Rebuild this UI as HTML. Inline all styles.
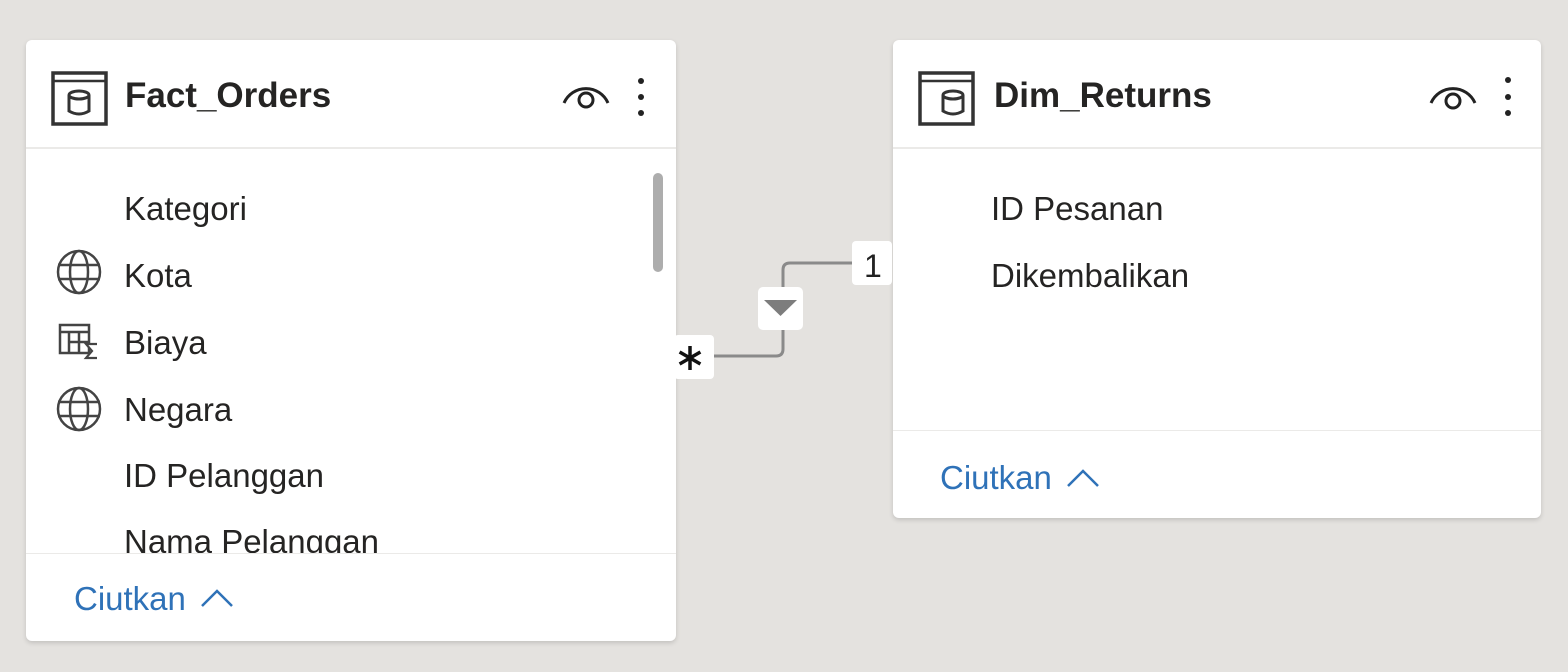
<!DOCTYPE html>
<html><head><meta charset="utf-8"><style>
*{margin:0;padding:0;box-sizing:border-box}
body{width:1568px;height:672px;background:#e4e2df;position:relative;overflow:hidden;font-family:"Liberation Sans",sans-serif;}
.card{position:absolute;background:#fff;border-radius:6px;box-shadow:0 2px 5px rgba(0,0,0,.15);overflow:hidden}
.t{position:absolute;font-size:33px;color:#252423;white-space:nowrap;line-height:1}
.title{position:absolute;font-size:35px;font-weight:bold;color:#252423;line-height:1}
.hr{position:absolute;left:0;right:0;height:2px;background:#ebeae8}
.link{position:absolute;font-size:33px;color:#2f72b8;line-height:1}
svg{position:absolute;overflow:visible}
</style></head><body>

<div class="card" style="left:26px;top:40px;width:650px;height:601px">
  <svg style="left:0;top:0" width="650" height="601">
    <rect x="27" y="33" width="53" height="51" fill="none" stroke="#333" stroke-width="3.5"/>
    <line x1="27" y1="41" x2="80" y2="41" stroke="#333" stroke-width="2.5"/>
    <ellipse cx="53" cy="55" rx="10" ry="4" fill="none" stroke="#333" stroke-width="3"/>
    <path d="M43 55 V71 Q53 77 63 71 V55" fill="none" stroke="#333" stroke-width="3"/>
    <path d="M538 63 A24 24 0 0 1 582 63" fill="none" stroke="#222" stroke-width="3"/>
    <circle cx="560" cy="60" r="7" fill="none" stroke="#222" stroke-width="3"/>
    <circle cx="615" cy="41" r="3" fill="#222"/><circle cx="615" cy="57" r="3" fill="#222"/><circle cx="615" cy="73" r="3" fill="#222"/>
    <rect x="627" y="133" width="10" height="99" rx="5" fill="#adadad"/>
    <g fill="none" stroke="#444" stroke-width="2.5">
      <circle cx="53" cy="232" r="21"/><ellipse cx="53" cy="232" rx="9" ry="21"/>
      <line x1="32" y1="225" x2="74" y2="225"/><line x1="32" y1="239" x2="74" y2="239"/>
      <circle cx="53" cy="369" r="21"/><ellipse cx="53" cy="369" rx="9" ry="21"/>
      <line x1="32" y1="362" x2="74" y2="362"/><line x1="32" y1="376" x2="74" y2="376"/>
      <rect x="34" y="285" width="29" height="28"/>
      <line x1="34" y1="292" x2="63" y2="292"/><line x1="43" y1="292" x2="43" y2="313"/><line x1="53" y1="292" x2="53" y2="313"/><line x1="43" y1="302" x2="63" y2="302"/>
      <path d="M71 304 H60 L66 311 L60 318 H71" stroke-width="2.2" fill="#fff"/>
    </g>
  </svg>
  <div class="title" style="left:99px;top:38px">Fact_Orders</div>
  <div class="hr" style="top:107px"></div>
  <div class="t" style="left:98px;top:152px">Kategori</div>
  <div class="t" style="left:98px;top:219px">Kota</div>
  <div class="t" style="left:98px;top:286px">Biaya</div>
  <div class="t" style="left:98px;top:353px">Negara</div>
  <div class="t" style="left:98px;top:419px">ID Pelanggan</div>
  <div style="position:absolute;left:0;top:485px;width:650px;height:28px;overflow:hidden"><div class="t" style="left:98px;top:0">Nama Pelanggan</div></div>
  <div class="hr" style="top:513px;height:1px"></div>
  <div class="link" style="left:48px;top:542px">Ciutkan</div>
  <svg style="left:0;top:0" width="650" height="601"><path d="M176 566 L191 551 L206 566" fill="none" stroke="#2f72b8" stroke-width="2.5"/></svg>
</div>

<div class="card" style="left:893px;top:40px;width:648px;height:478px">
  <svg style="left:0;top:0" width="648" height="478">
    <rect x="27" y="33" width="53" height="51" fill="none" stroke="#333" stroke-width="3.5"/>
    <line x1="27" y1="41" x2="80" y2="41" stroke="#333" stroke-width="2.5"/>
    <ellipse cx="60" cy="55" rx="10" ry="4" fill="none" stroke="#333" stroke-width="3"/>
    <path d="M50 55 V71 Q60 77 70 71 V55" fill="none" stroke="#333" stroke-width="3"/>
    <path d="M538 63 A24 24 0 0 1 582 63" fill="none" stroke="#222" stroke-width="3"/>
    <circle cx="560" cy="61" r="7" fill="none" stroke="#222" stroke-width="3"/>
    <circle cx="615" cy="40" r="3" fill="#222"/><circle cx="615" cy="57" r="3" fill="#222"/><circle cx="615" cy="73" r="3" fill="#222"/>
    <path d="M175 446 L190 431 L205 446" fill="none" stroke="#2f72b8" stroke-width="2.5"/>
  </svg>
  <div class="title" style="left:101px;top:38px">Dim_Returns</div>
  <div class="hr" style="top:107px"></div>
  <div class="t" style="left:98px;top:152px">ID Pesanan</div>
  <div class="t" style="left:98px;top:219px">Dikembalikan</div>
  <div class="hr" style="top:390px;height:1px"></div>
  <div class="link" style="left:47px;top:421px">Ciutkan</div>
</div>

<svg style="left:0;top:0" width="1568" height="672">
  <path d="M712 356 H776 Q783 356 783 349 V270 Q783 263 790 263 H855" fill="none" stroke="#8a8a8a" stroke-width="3"/>
  <rect x="758" y="287" width="45" height="43" rx="5" fill="#fff"/>
  <path d="M764 300 H797 L780.5 316 Z" fill="#7d7d7d"/>
  <rect x="852" y="241" width="40" height="44" rx="4" fill="#fff"/>
  <text x="864" y="277" font-family="Liberation Sans" font-size="32" fill="#222">1</text>
  <rect x="674" y="335" width="40" height="44" rx="4" fill="#fff"/>
  <g stroke="#111" stroke-width="3.5" stroke-linecap="butt">
    <line x1="690" y1="346" x2="690" y2="370"/>
    <line x1="679.6" y1="352" x2="700.4" y2="364"/>
    <line x1="679.6" y1="364" x2="700.4" y2="352"/>
  </g>
</svg>
</body></html>
